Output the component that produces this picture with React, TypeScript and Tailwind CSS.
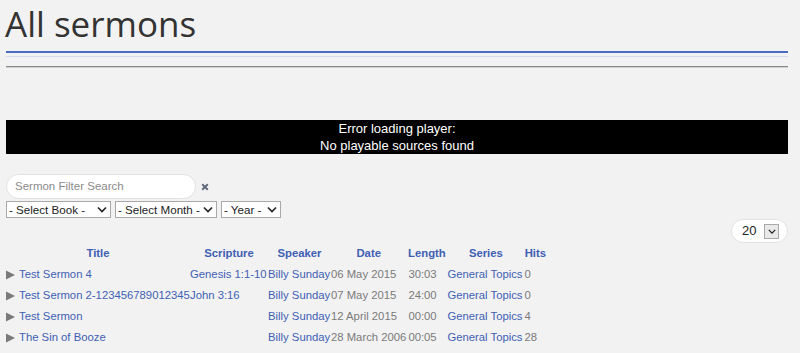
import React from "react";

const Chevron = ({ className = "" }: { className?: string }) => (
  <svg viewBox="0 0 10 6" className={className} fill="none" stroke="#222" strokeWidth="1.6">
    <path d="M1 1 L5 5 L9 1" />
  </svg>
);

const Sel = ({ label, w }: { label: string; w: string }) => (
  <div className={`${w} h-[17px] bg-white border border-[#a9a9a9] flex items-center justify-between pl-[2px] pr-[3px] text-[11.6px] leading-none text-[#222] whitespace-nowrap`}>
    <span>{label}</span>
    <Chevron className="w-[10px] h-[7px] shrink-0" />
  </div>
);

const Arrow = () => (
  <svg viewBox="0 0 10 10" className="w-[9px] h-[10px] inline-block mr-[4px] -mt-[1px] align-middle">
    <path d="M0 0 L10 5 L0 10 Z" fill="#7a7a7a" />
  </svg>
);

const rows = [
  { t: "Test Sermon 4", s: "Genesis 1:1-10", d: "06 May 2015", l: "30:03", h: "0" },
  { t: "Test Sermon 2-123456789012345", s: "John 3:16", d: "07 May 2015", l: "24:00", h: "0" },
  { t: "Test Sermon", s: "", d: "12 April 2015", l: "00:00", h: "4" },
  { t: "The Sin of Booze", s: "", d: "28 March 2006", l: "00:05", h: "28" },
];

export default function App() {
  return (
    <div className="w-[800px] h-[353px] bg-[#f2f2f2] overflow-hidden px-[6px]" style={{ fontFamily: "'Liberation Sans', Arial, sans-serif" }}>
      <h1 className="text-[35px] leading-[40px] pt-[4px] text-[#333] -ml-[1px]" style={{ fontFamily: "'Open Sans', sans-serif" }}>
        All sermons
      </h1>
      <div className="mt-[7px] w-[782px] h-[2px] bg-[#4a6cc0]" />
      <div className="mt-[3px] w-[782px] h-[1px] bg-[#d4dbee]" />
      <div className="mt-[9px] w-[782px] h-[1px] bg-[#8a8a8a]" />
      <div className="w-[782px] h-[1px] bg-[#d0d0d0]" />
      <div className="mt-[52px] w-[782px] h-[34px] bg-black text-white text-[13px] leading-[17px] text-center pt-0 flex flex-col justify-center">
        <div>Error loading player:</div>
        <div>No playable sources found</div>
      </div>
      <div className="mt-[20px] flex items-center">
        <div className="w-[190px] h-[25px] bg-white rounded-full border border-[#e2e2e2] flex items-center pl-[8px] text-[11.5px] text-[#8a8a8a]">
          Sermon Filter Search
        </div>
        <svg viewBox="0 0 10 10" className="w-[8px] h-[8px] ml-[5px]">
          <path d="M1.5 1.5 L8.5 8.5 M8.5 1.5 L1.5 8.5" stroke="#5f6b7a" strokeWidth="2.4" />
        </svg>
      </div>
      <div className="mt-[2px] flex gap-[4px]">
        <Sel label="- Select Book -" w="w-[105px]" />
        <Sel label="- Select Month -" w="w-[102px]" />
        <Sel label="- Year -" w="w-[60px]" />
      </div>
      <div className="flex justify-end mt-[1px] w-[782px]">
        <div className="w-[57px] h-[24px] bg-white rounded-full border border-[#e2e2e2] flex items-center pl-[10px] text-[13px] text-[#222]">
          <span>20</span>
          <div className="ml-[8px] w-[15px] h-[15px] border border-[#a9a9a9] bg-[#e9e9e9] flex items-center justify-center">
            <Chevron className="w-[8px] h-[5px]" />
          </div>
        </div>
      </div>
      <table className="table-fixed border-collapse text-[11.3px] leading-[21px] whitespace-nowrap">
        <colgroup>
          <col className="w-[184px]" />
          <col className="w-[78px]" />
          <col className="w-[63px]" />
          <col className="w-[75px]" />
          <col className="w-[41px]" />
          <col className="w-[77px]" />
          <col className="w-[22px]" />
        </colgroup>
        <thead>
          <tr className="h-[21px] text-[#3f5fb4] font-bold">
            <th className="p-0 text-center">Title</th>
            <th className="p-0 text-center">Scripture</th>
            <th className="p-0 text-center">Speaker</th>
            <th className="p-0 text-center">Date</th>
            <th className="p-0 text-center">Length</th>
            <th className="p-0 text-center">Series</th>
            <th className="p-0 text-center">Hits</th>
          </tr>
        </thead>
        <tbody>
          {rows.map((r) => (
            <tr key={r.t} className="h-[21px]">
              <td className="p-0 text-[#3f5fb4]"><Arrow />{r.t}</td>
              <td className="p-0 text-[#3f5fb4] overflow-visible">{r.s}</td>
              <td className="p-0 text-[#3f5fb4]">Billy Sunday</td>
              <td className="p-0 text-[#7a7a7a]">{r.d}</td>
              <td className="p-0 pl-[2px] text-[#7a7a7a]">{r.l}</td>
              <td className="p-0 text-[#3f5fb4]">General Topics</td>
              <td className="p-0 text-[#7a7a7a]">{r.h}</td>
            </tr>
          ))}
        </tbody>
      </table>
    </div>
  );
}
